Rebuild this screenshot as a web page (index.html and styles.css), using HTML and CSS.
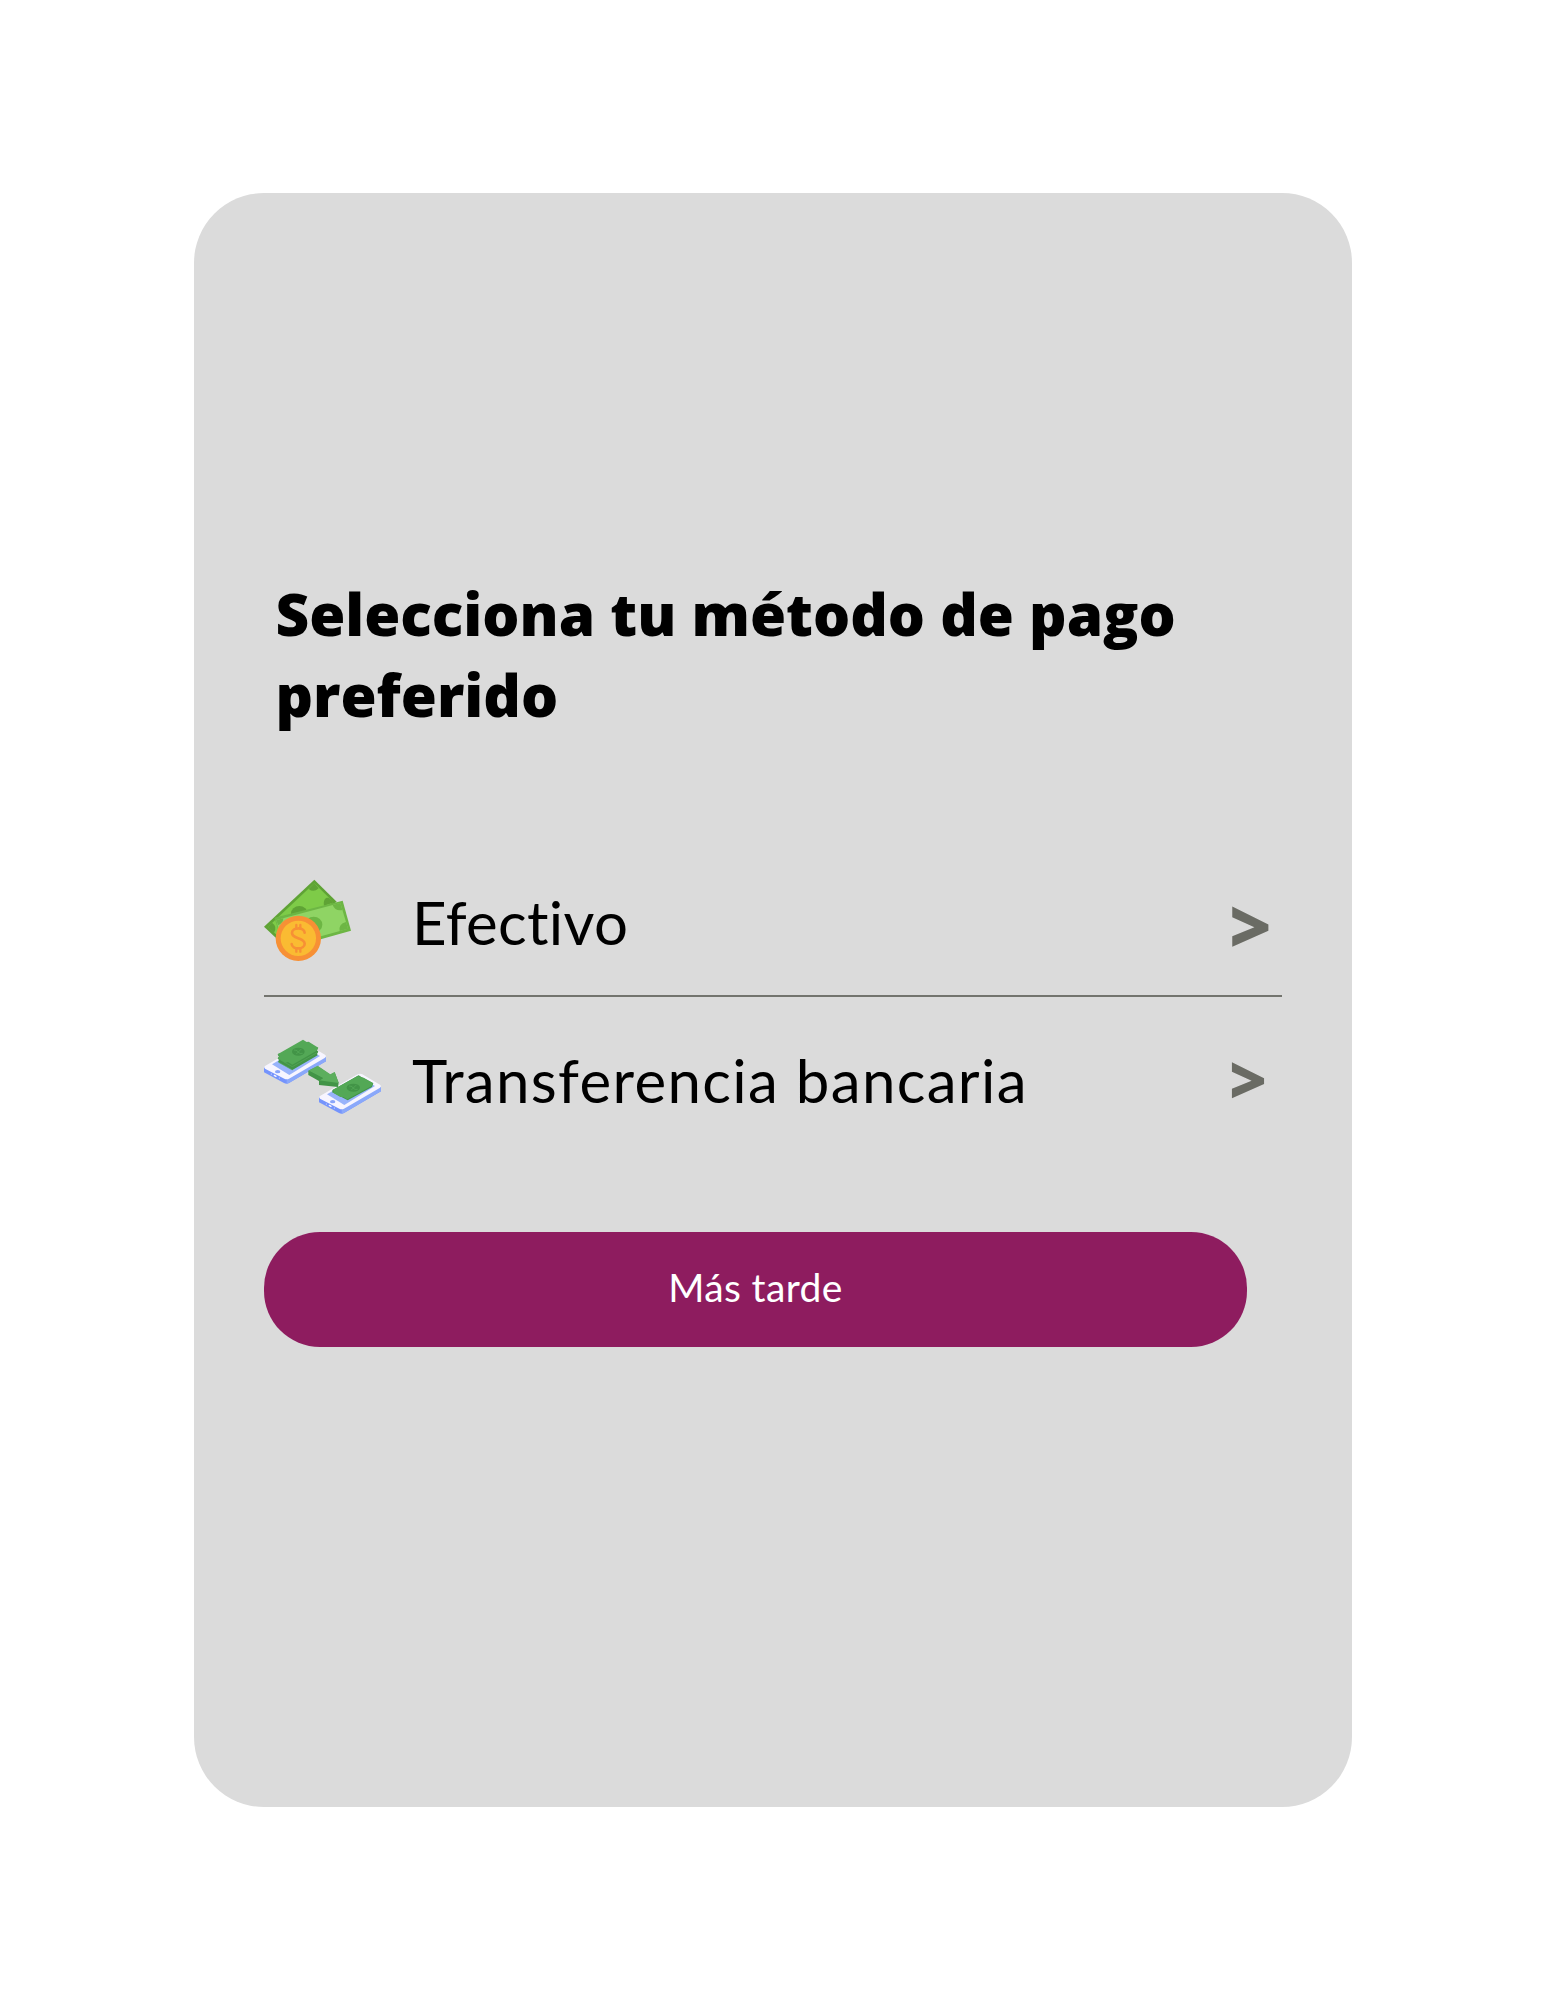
FILE: index.html
```
<!DOCTYPE html>
<html lang="es">
<head>
<meta charset="utf-8">
<title>Método de pago</title>
<link rel="stylesheet" href="styles.css">
</head>
<body>
<main class="card">
  <h1 class="title">Selecciona tu método de pago preferido</h1>
  <ul class="methods">
    <li class="method">
      <span class="icon">
        <svg width="88" height="83" viewBox="27 27 264 249" aria-hidden="true">
          <path fill="#5fa335" d="M178 29 L27 170 L80 220 L245 95Z"/>
          <path fill="#7ecb48" d="M178 40 L39 170 L78 207 L235 96Z"/>
          <path fill="#5fa335" d="M161 57 Q176 69 191 55 L178 40Z M51 158 Q68 170 57 188 L39 170Z M207 107 C204 88 213 81 222 84 L237 97Z"/>
          <ellipse cx="133" cy="130" rx="25" ry="22" fill="#5fa335"/>
          <path fill="#6db644" d="M58 143 L263 92 L288 182 L90 238Z"/>
          <path fill="#8fd464" d="M64 150 L256 99 L279 176 L84 230Z"/>
          <path fill="#6db644" d="M233 105 Q240 124 262 120 L256 99Z M273 156 Q250 162 254 183 L279 176Z M64 150 L85 145 Q84 160 69 166Z"/>
          <ellipse cx="176" cy="164" rx="26" ry="24" fill="#6db644"/>
          <circle cx="130" cy="205" r="68" fill="#f79035"/>
          <circle cx="130" cy="205" r="53" fill="#fabb32"/>
          <path fill="none" stroke="#f79035" stroke-width="8" stroke-linecap="round" stroke-linejoin="round" d="M149 188 C147 171 111 171 111 189 C111 208 149 201 149 221 C149 240 111 239 110 222"/>
          <path fill="none" stroke="#f79035" stroke-width="7" stroke-linecap="round" d="M124 165V175M136 165V175M124 236V245M136 236V245"/>
        </svg>
      </span>
      <span class="label label-cash">Efectivo</span>
      <span class="chevron chevron-cash">&gt;</span>
    </li>
    <li class="method method-transfer">
      <span class="icon">
        <svg width="118" height="75" viewBox="27 27 354 225" aria-hidden="true">
          <g id="phone">
            <path fill="#7594fc" d="M27 112 L213 80 V94 L102 159 Q95 163 87 159 L27 127Z"/>
            <path fill="#8aa8fa" d="M95 148 L213 80 V94 L102 159 L95 161Z"/>
            <path fill="#f7f5ff" d="M30 108 L143 43 Q150 39 157 43 L210 74 Q216 79 209 84 L102 146 Q95 150 88 146 L30 116 Q25 112 30 108Z"/>
            <path fill="#98b3fb" d="M51 103 L145 49 L195 78 L103 135Z"/>
            <ellipse cx="68" cy="125" rx="8" ry="5" fill="#8aa5f9"/>
            <path stroke="#f7f5ff" stroke-width="4" stroke-linecap="round" d="M58 136 L63 139"/>
            <circle cx="49" cy="132" r="1.5" fill="#f7f5ff"/>
            <circle cx="73" cy="144" r="1.5" fill="#f7f5ff"/>
          </g>
          <path fill="#429447" d="M68 74 L72 70 L112 96 L189 52 L186 61 L190 65 L186 72 L188 76 L112 120 L69 96 L72 90 L68 85 L72 80Z"/>
          <path fill="none" stroke="#58a95a" stroke-width="2" d="M70 86 L112 110 L188 67M71 97 L112 120"/>
          <path fill="#53a856" d="M68 73 L144 29 L155 36 L161 35 L190 53 L185 62 L112 104 L99 96 L91 98 L68 85 L74 78Z"/>
          <ellipse cx="130" cy="65" rx="19" ry="12" fill="#429447"/>
          <path fill="none" stroke="#58ad5b" stroke-width="2" d="M117 60 Q129 60 129 66 Q135 73 143 70M124 72 L139 57"/>
          <use href="#phone" x="165" y="90"/>
          <path fill="#429447" d="M160 122 L192 151 V165 L249 171 L251 158 L239 127 L226 134 L188 109Z"/>
          <path fill="#5cae5d" d="M160 122 L188 107 L226 133 L239 126 L251 159 L191 151 L204 144 L162 122Z"/>
          <path fill="#429447" d="M160 122 V135 L192 153 L204 145Z"/>
          <path fill="#429447" d="M232 181 L311 136 L320 142 L355 160 L351 171 L278 211 L232 187Z"/>
          <path fill="#53a856" d="M232 180 L309 137 L320 142 L326 143 L354 159 L350 168 L277 208 L265 201 L256 201 L232 187 L238 184Z"/>
          <ellipse cx="295" cy="173" rx="20" ry="12" fill="#429447"/>
          <path fill="none" stroke="#58ad5b" stroke-width="2" d="M282 168 Q294 168 294 174 Q300 181 308 178M289 180 L304 165"/>
        </svg>
      </span>
      <span class="label label-transfer">Transferencia bancaria</span>
      <span class="chevron chevron-transfer">&gt;</span>
    </li>
  </ul>
  <button class="later" type="button">Más tarde</button>
</main>
</body>
</html>
```
FILE: styles.css
```
* {
  box-sizing: border-box;
}

body {
  margin: 0;
  padding: 193px 193px 193px 194px;
  background: #fff;
  color: #000;
  font-family: Lato, sans-serif;
}

.card {
  height: 1614px;
  padding: 380px 70px 0;
  border-radius: 70px;
  background: #dbdbdb;
}

.title {
  width: 960px;
  height: 162px;
  margin: 0 0 112px 11.5px;
  font: 800 58.45px/81px "Open Sans", sans-serif;
}

.methods {
  margin: 0;
  padding: 0;
  list-style: none;
}

.method {
  display: grid;
  grid-template-columns: 148px 1fr 53px;
  align-items: center;
  height: 150px;
  border-bottom: 2px solid #73746e;
}

.method-transfer {
  height: 160px;
  border-bottom: 0;
}

.icon {
  padding-bottom: 2px;
}

.icon svg {
  display: block;
  overflow: visible;
}

.label {
  font-size: 60px;
  line-height: 72px;
  white-space: nowrap;
}

.label-cash {
  padding-top: 2px;
  letter-spacing: 0.3px;
}

.label-transfer {
  padding-top: 6px;
  letter-spacing: 1.33px;
}

.chevron {
  color: #6a6b64;
  font-family: "Open Sans", sans-serif;
  font-weight: 800;
  line-height: 1;
}

.chevron-cash {
  padding-top: 6px;
  font-size: 73px;
}

.chevron-transfer {
  padding-top: 5px;
  font-size: 65px;
}

.later {
  display: block;
  width: 983px;
  height: 115px;
  margin: 75px 0 0;
  padding: 0 0 5px;
  border: 0;
  border-radius: 56px;
  background: #8e1c5f;
  color: #fff;
  font: 400 39px/110px Lato, sans-serif;
  letter-spacing: 0.4px;
}
```
